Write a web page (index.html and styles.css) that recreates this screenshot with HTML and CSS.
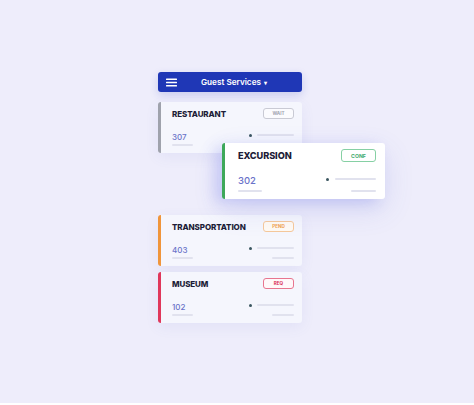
FILE: index.html
```html
<!DOCTYPE html>
<html>
<head>
<meta charset="utf-8">
<link rel="stylesheet" href="styles.css">
</head>
<body>
<div class="page">
  <div class="stack">
    <div class="topbar">
      <svg class="burger" width="11" height="9" viewBox="0 0 11 9"><rect x="0" y="0.5" width="11" height="1.4" rx="0.5" fill="#fff"/><rect x="0" y="3.8" width="11" height="1.4" rx="0.5" fill="#fff"/><rect x="0" y="7.1" width="11" height="1.4" rx="0.5" fill="#fff"/></svg>
      <span class="title">Guest Services <span class="caret">▾</span></span>
    </div>

    <div class="card c-gray">
      <div class="row-top"><span class="name">RESTAURANT</span><span class="badge b-gray">WAIT</span></div>
      <div class="row-bot">
        <div class="left"><span class="num">307</span><span class="under"></span></div>
        <div class="right"><div class="r1"><span class="dot"></span><span class="line l1"></span></div><span class="line l2"></span></div>
      </div>
    </div>

    <div class="card big c-green">
      <div class="row-top"><span class="name">EXCURSION</span><span class="badge b-green">CONF</span></div>
      <div class="row-bot">
        <div class="left"><span class="num">302</span><span class="under"></span></div>
        <div class="right"><div class="r1"><span class="dot"></span><span class="line l1"></span></div><span class="line l2"></span></div>
      </div>
    </div>

    <div class="card c-orange after-big">
      <div class="row-top"><span class="name">TRANSPORTATION</span><span class="badge b-orange">PEND</span></div>
      <div class="row-bot">
        <div class="left"><span class="num">403</span><span class="under"></span></div>
        <div class="right"><div class="r1"><span class="dot"></span><span class="line l1"></span></div><span class="line l2"></span></div>
      </div>
    </div>

    <div class="card c-red">
      <div class="row-top"><span class="name">MUSEUM</span><span class="badge b-red">REQ</span></div>
      <div class="row-bot">
        <div class="left"><span class="num">102</span><span class="under"></span></div>
        <div class="right"><div class="r1"><span class="dot"></span><span class="line l1"></span></div><span class="line l2"></span></div>
      </div>
    </div>
  </div>
</div>
</body>
</html>
```

FILE: styles.css
```css
html { background: #ffffff; }
body {
  margin: 0;
  font-family: Inter, "Liberation Sans", sans-serif;
}
.page {
  height: 403px;
  background: #eeedfb;
  padding: 72px 0 0 158px;
  box-sizing: border-box;
}
.stack {
  display: flex;
  flex-direction: column;
  align-items: flex-start;
  width: 144px;
}
.topbar {
  width: 144px;
  height: 20px;
  background: #1f37b6;
  border-radius: 3px;
  display: flex;
  align-items: center;
  padding: 0 11px 0 8px;
  box-sizing: border-box;
  box-shadow: 0 3px 8px rgba(31, 55, 182, 0.18);
}
.burger { display: block; }
.topbar .title {
  flex: 1;
  text-align: center;
  color: #ffffff;
  font-size: 8.2px;
  font-weight: 600;
  line-height: 10px;
}
.caret { font-size: 6px; margin-left: 1px; }

.card {
  width: 144px;
  box-sizing: border-box;
  background: #f5f6fd;
  border-left: 3px solid #a0a3ad;
  border-radius: 3px;
  padding: 6px 8px 7px 11px;
  margin-top: 10px;
  box-shadow: 0 4px 14px rgba(90, 100, 190, 0.08);
}
.card + .card { margin-top: 6px; }
.card.big {
  position: relative;
  z-index: 1;
  width: 163px;
  margin-top: -10px;
  margin-left: 64px;
  background: #ffffff;
  padding: 6px 9px 7px 13px;
  box-shadow: -7px 4px 14px rgba(95, 105, 235, 0.22), 0 10px 30px rgba(80, 90, 200, 0.14);
}
.card.after-big { margin-top: 16px; }

.c-gray { border-left-color: #9fa2ac; }
.c-green { border-left-color: #3ea85a; }
.c-orange { border-left-color: #f0953b; }
.c-red { border-left-color: #e0375b; }

.row-top {
  display: flex;
  justify-content: space-between;
  align-items: center;
  height: 11px;
}
.big .row-top { height: 13px; }
.name {
  font-size: 8px;
  font-weight: 800;
  color: #1d1d38;
  line-height: 10px;
  letter-spacing: -0.1px;
}
.big .name { font-size: 9.2px; }

.badge {
  width: 31px;
  height: 11px;
  box-sizing: border-box;
  border: 1px solid #cacbd4;
  border-radius: 3px;
  font-size: 4.6px;
  font-weight: 700;
  display: flex;
  align-items: center;
  justify-content: center;
  background: #fbfbfe;
}
.big .badge { width: 35px; height: 13px; font-size: 5.2px; }
.b-gray { color: #a3a5b1; border-color: #c9cad4; }
.b-green { color: #3fab6d; border-color: #86d0a4; background: #ffffff; }
.b-orange { color: #f0a152; border-color: #f6c99b; background: #fffaf4; }
.b-red { color: #d93158; border-color: #e8758f; background: #fff8fa; }

.row-bot {
  display: flex;
  justify-content: space-between;
  margin-top: 13px;
}
.left { display: flex; flex-direction: column; }
.num {
  font-size: 8px;
  line-height: 10px;
  font-weight: 500;
  color: #6a73c9;
}
.big .num { font-size: 9.5px; line-height: 12px; }
.under {
  width: 21px;
  height: 2px;
  margin-top: 2px;
  border-radius: 1px;
  background: #e1e2ee;
}
.big .under { width: 24px; margin-top: 3px; }
.right {
  display: flex;
  flex-direction: column;
  align-items: flex-end;
}
.r1 {
  display: flex;
  align-items: center;
  height: 6px;
}
.big .r1 { height: 8px; }
.dot {
  width: 3px;
  height: 3px;
  border-radius: 50%;
  background: #3b5660;
  margin-right: 5px;
}
.big .dot { margin-right: 6px; }
.line {
  height: 2px;
  border-radius: 1px;
  background: #e1e2ee;
}
.l1 { width: 37px; }
.l2 { width: 22px; margin-top: 6px; }
.big .l1 { width: 41px; }
.big .l2 { width: 25px; margin-top: 7px; }
```
